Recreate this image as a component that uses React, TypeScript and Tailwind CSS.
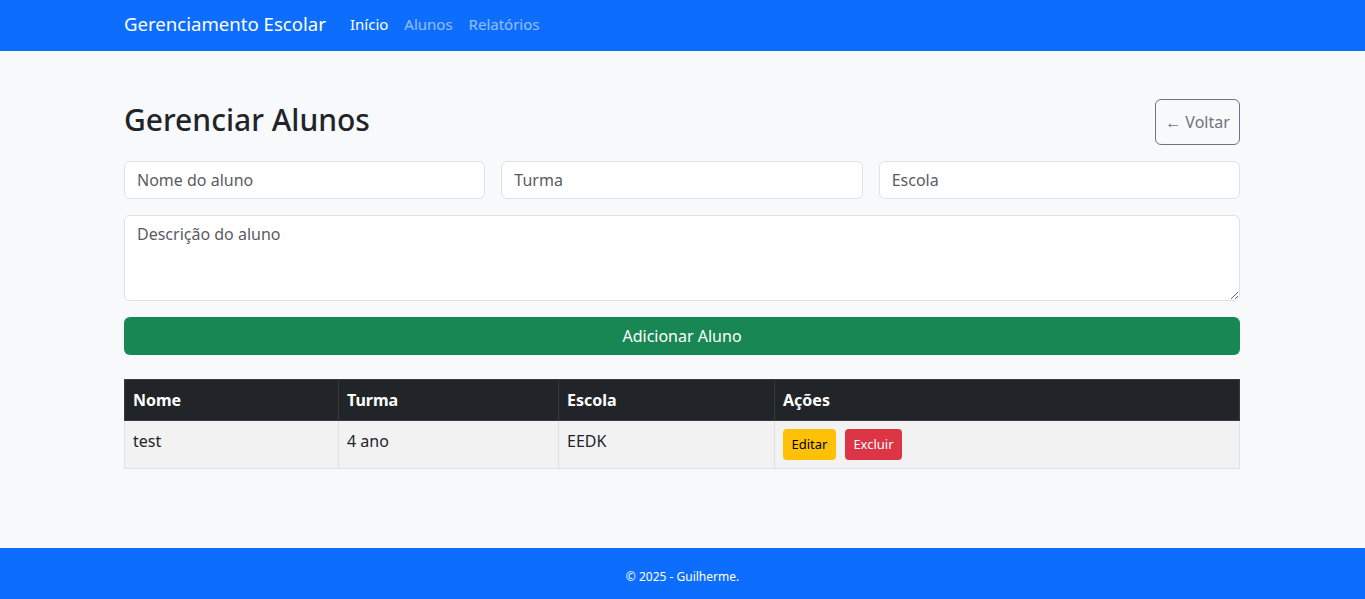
import { useState } from 'react';

type Aluno = { id: number; nome: string; turma: string; escola: string };

const font = { fontFamily: '"Segoe UI", "Noto Sans", "Liberation Sans", sans-serif' };

export default function App() {
  const [alunos] = useState<Aluno[]>([{ id: 1, nome: 'test', turma: '4 ano', escola: 'EEDK' }]);

  return (
    <div className="min-h-screen flex flex-col bg-[#f8f9fa] text-[#212529] text-base" style={font}>
      {/* Navbar */}
      <nav className="bg-[#0d6efd] h-[51px] shrink-0">
        <div className="w-[1117px] pr-px mx-auto h-full flex items-center pb-[4px]">
          <span className="text-[18.6px] text-white mr-[16px] leading-[30px]">Gerenciamento Escolar</span>
          <a className="px-2 text-[15px] text-white leading-6">Início</a>
          <a className="px-2 text-[15px] text-white/55 leading-6">Alunos</a>
          <a className="px-2 text-[15px] text-white/55 leading-6">Relatórios</a>
        </div>
      </nav>

      <main className="flex-1">
        <div className="w-[1117px] pr-px mx-auto pt-12">
          <div className="flex items-center justify-between mb-4">
            <h1 className="text-[30px] font-medium leading-[1.2] -mt-[4px]">Gerenciar Alunos</h1>
            <button className="h-[46px] w-[85px] border border-[#6c757d] text-[#6c757d] rounded-md text-base">
              ← Voltar
            </button>
          </div>

          <div className="grid grid-cols-3 gap-4 mb-4">
            <input className="h-[38px] bg-white border border-[#dee2e6] rounded-md px-3 placeholder:text-[#595c5f]" placeholder="Nome do aluno" />
            <input className="h-[38px] bg-white border border-[#dee2e6] rounded-md px-3 placeholder:text-[#595c5f]" placeholder="Turma" />
            <input className="h-[38px] bg-white border border-[#dee2e6] rounded-md px-3 placeholder:text-[#595c5f]" placeholder="Escola" />
          </div>

          <textarea
            rows={3}
            className="block w-full h-[86px] bg-white border border-[#dee2e6] rounded-md px-3 py-1.5 leading-6 mb-4 placeholder:text-[#595c5f]"
            placeholder="Descrição do aluno"
          />

          <button className="w-full h-[38px] bg-[#198754] text-white rounded-md">Adicionar Aluno</button>

          <table className="w-full mt-6 border-collapse">
            <thead>
              <tr className="bg-[#212529] text-white">
                <th className="w-[214px] text-left font-bold p-2 leading-6 border border-[#373b3e]">Nome</th>
                <th className="w-[220px] text-left font-bold p-2 leading-6 border border-[#373b3e]">Turma</th>
                <th className="w-[216px] text-left font-bold p-2 leading-6 border border-[#373b3e]">Escola</th>
                <th className="text-left font-bold p-2 leading-6 border border-[#373b3e]">Ações</th>
              </tr>
            </thead>
            <tbody>
              {alunos.map(a => (
                <tr key={a.id} className="bg-[#f2f2f2] align-top">
                  <td className="p-2 leading-6 border border-[#dee2e6]">{a.nome}</td>
                  <td className="p-2 leading-6 border border-[#dee2e6]">{a.turma}</td>
                  <td className="p-2 leading-6 border border-[#dee2e6]">{a.escola}</td>
                  <td className="p-2 border border-[#dee2e6]">
                    <div className="flex gap-[9px]">
                      <button className="h-[31px] w-[53px] bg-[#ffc107] text-black text-[13px] rounded">Editar</button>
                      <button className="h-[31px] w-[57px] bg-[#dc3545] text-white text-[13px] rounded">Excluir</button>
                    </div>
                  </td>
                </tr>
              ))}
            </tbody>
          </table>
        </div>
      </main>

      <footer className="bg-[#0d6efd] h-[51px] shrink-0 flex items-center justify-center pt-[6px]">
        <p className="text-white text-[12px]">© 2025 - Guilherme.</p>
      </footer>
    </div>
  );
}
